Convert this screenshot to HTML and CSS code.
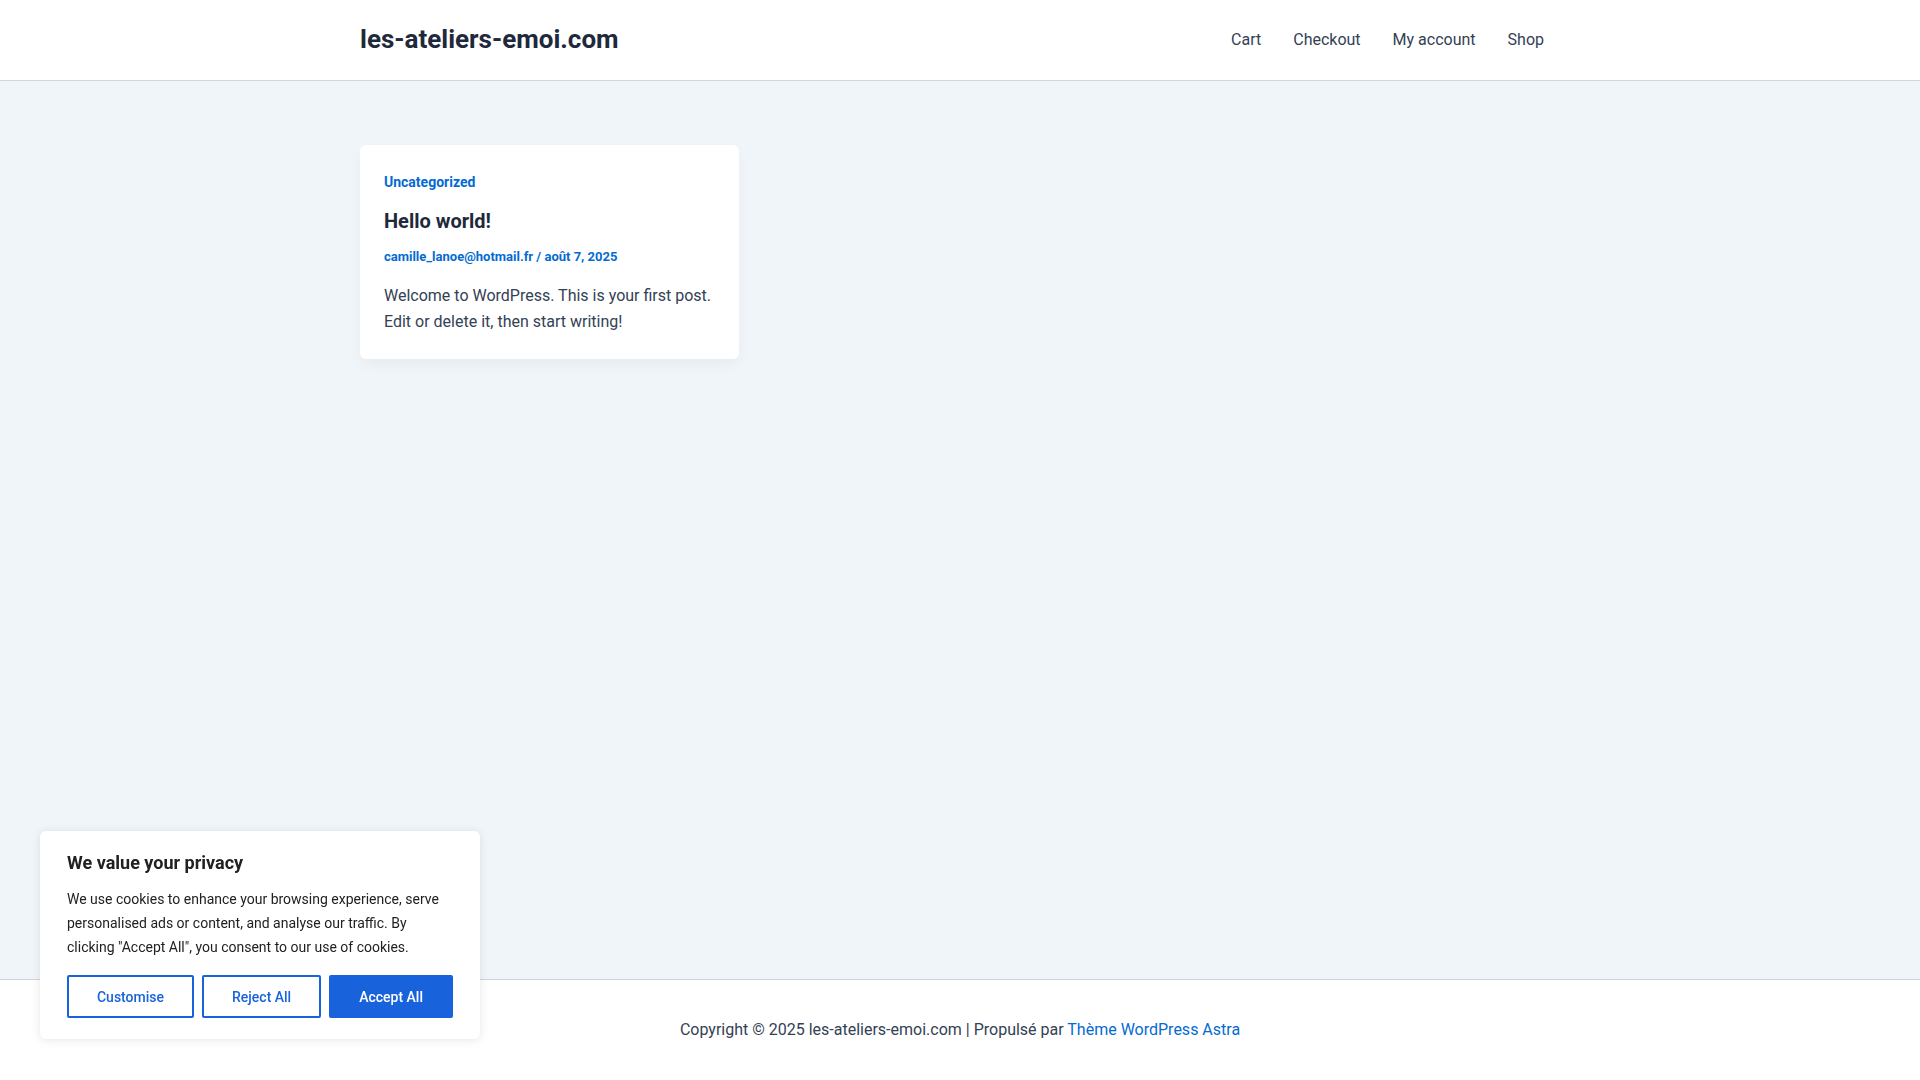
FILE: index.html
```html
<!DOCTYPE html>
<html lang="fr">
<head>
    <meta charset="UTF-8">
    <meta name="viewport" content="width=device-width, initial-scale=1.0">
    <title>les-ateliers-emoi.com</title>
    <link rel="stylesheet" href="styles.css">
</head>
<body>
    <header class="site-header">
        <div class="header-inner">
            <a class="site-title" href="#">les-ateliers-emoi.com</a>
            <nav class="main-nav">
                <a href="#">Cart</a>
                <a href="#">Checkout</a>
                <a href="#">My account</a>
                <a href="#">Shop</a>
            </nav>
        </div>
    </header>

    <main class="site-content">
        <div class="content-inner">
            <article class="post-card">
                <a class="post-cat" href="#">Uncategorized</a>
                <h2 class="post-title">Hello world!</h2>
                <p class="post-meta"><a href="#">camille_lanoe@hotmail.fr</a> / <a href="#">août 7, 2025</a></p>
                <p class="post-excerpt">Welcome to WordPress. This is your first post. Edit or delete it, then start writing!</p>
            </article>
        </div>
    </main>

    <footer class="site-footer">
        <p>Copyright © 2025 les-ateliers-emoi.com | Propulsé par <a href="#">Thème WordPress Astra</a></p>
    </footer>

    <div class="cookie-banner">
        <p class="cookie-title">We value your privacy</p>
        <p class="cookie-text">We use cookies to enhance your browsing experience, serve personalised ads or content, and analyse our traffic. By clicking "Accept All", you consent to our use of cookies.</p>
        <div class="cookie-buttons">
            <button class="btn-outline">Customise</button>
            <button class="btn-outline">Reject All</button>
            <button class="btn-solid">Accept All</button>
        </div>
    </div>
</body>
</html>
```
FILE: styles.css
```css
* { margin: 0; padding: 0; box-sizing: border-box; }
html { width: 100%; min-height: 100%; }
body {
    width: 100%; min-height: 100vh;
    font-family: Roboto, 'Liberation Sans', sans-serif;
    font-size: 16px;
    color: #334155;
    background: #f0f5fa;
    display: flex; flex-direction: column;
}
a { text-decoration: none; color: inherit; }

.site-header {
    background: #fff;
    border-bottom: 1px solid #d1d5db;
}
.header-inner {
    max-width: 1200px;
    margin: 0 auto;
    height: 80px;
    display: flex;
    align-items: center;
    justify-content: space-between;
}
.site-title {
    font-size: 26px;
    font-weight: 700;
    color: #1e293b;
    line-height: 1.2;
}
.main-nav { display: flex; }
.main-nav a {
    padding: 0 16px;
    font-size: 16px;
    line-height: 80px;
    color: #334155;
}

.site-content { flex-grow: 1; }
.content-inner {
    max-width: 1200px;
    margin: 0 auto;
    padding-top: 64px;
}
.post-card {
    width: 379px;
    background: #fff;
    border-radius: 6px;
    padding: 24px 24px 23px;
    box-shadow: 0 6px 15px -2px rgba(16, 24, 40, 0.05);
}
.post-cat {
    display: block;
    font-size: 14px;
    font-weight: 700;
    line-height: 26px;
    color: #046bd2;
}
.post-title {
    margin-top: 13px;
    font-size: 20px;
    line-height: 26px;
    font-weight: 700;
    color: #1e293b;
}
.post-meta {
    margin-top: 13px;
    font-size: 13px;
    line-height: 20px;
    font-weight: 700;
    color: #046bd2;
}
.post-excerpt {
    margin-top: 16px;
    font-size: 16px;
    line-height: 26.4px;
    color: #334155;
}

.site-footer {
    background: #fff;
    border-top: 1px solid #d1d5db;
    height: 101px;
    padding-bottom: 2px;
    display: flex;
    align-items: center;
    justify-content: center;
    font-size: 16px;
    color: #334155;
}
.site-footer a { color: #046bd2; }

.cookie-banner {
    position: fixed;
    left: 40px; bottom: 41px;
    width: 440px;
    background: #fff;
    border-radius: 6px;
    padding: 20px 27px 21px 27px;
    box-shadow: 0 1px 10px rgba(0, 0, 0, 0.1);
    color: #212121;
}
.cookie-title {
    font-size: 18px;
    font-weight: 700;
    line-height: 24px;
}
.cookie-text {
    margin-top: 12px;
    font-size: 14px;
    line-height: 24px;
}
.cookie-buttons {
    margin-top: 16px;
    display: flex;
    gap: 8px;
}
.cookie-buttons button {
    flex: auto;
    height: 43px;
    padding: 0 27px;
    font-family: inherit;
    font-size: 14px;
    font-weight: 500;
    border: 2px solid #1863dc;
    border-radius: 2px;
    cursor: pointer;
}
.btn-outline { background: #fff; color: #1863dc; }
.btn-solid { background: #1863dc; color: #fff; }
```
